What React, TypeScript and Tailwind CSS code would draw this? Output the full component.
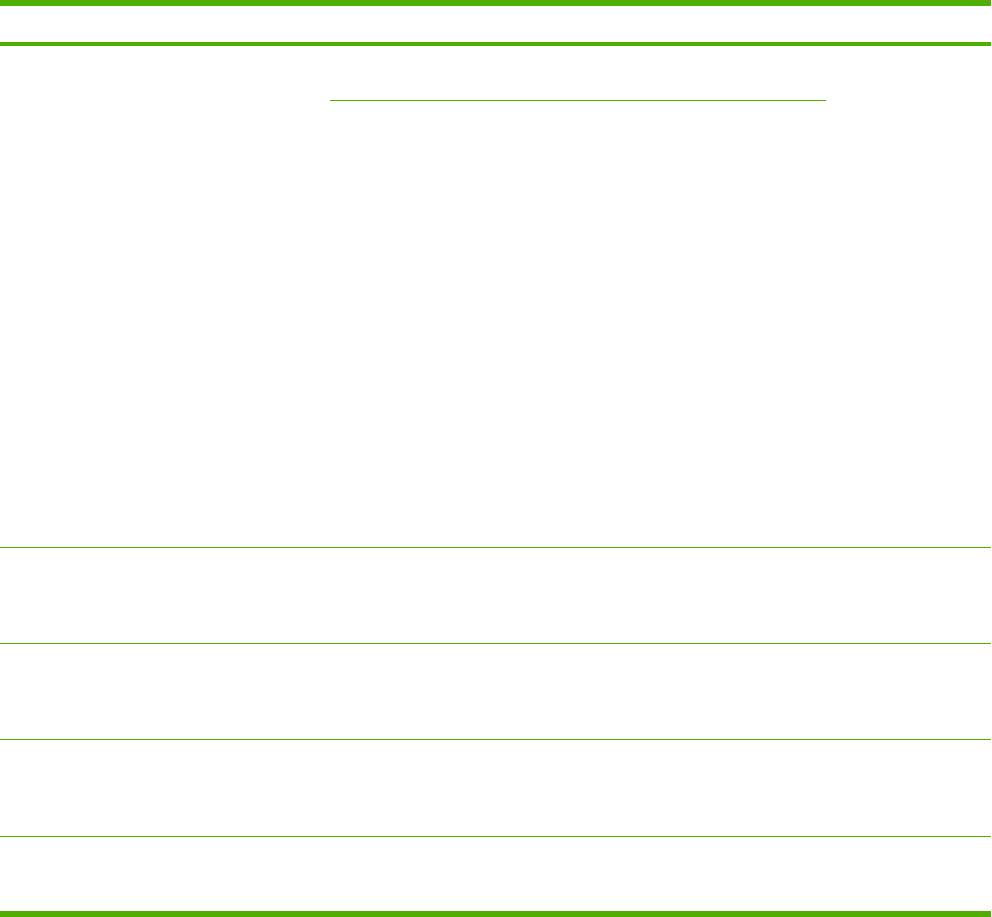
export default function App() {
  const rows = [
    { h: "h-[96px]" },
    { h: "h-[96px]" },
    { h: "h-[97px]" },
  ];

  return (
    <div className="min-h-screen bg-white font-['Liberation_Sans',sans-serif]">
      <div className="w-[991px]">
        {/* heading band */}
        <div className="h-[46px] border-t-[6px] border-b-[4px] border-[#50ae00]" />

        {/* first row with link line */}
        <div className="flex h-[502px] border-b border-[#50ae00]">
          <div className="w-[330px] shrink-0" />
          <div className="pt-[54px]">
            <div className="w-[496px] border-b-[1.5px] border-[#50ae00]" />
          </div>
        </div>

        {rows.map((r, i) => (
          <div key={i} className={`flex ${r.h} border-b border-[#50ae00]`}>
            <div className="w-[330px] shrink-0" />
            <div className="flex-1" />
          </div>
        ))}
        <div className="flex h-[74px]" />

        <div className="h-[6px] bg-[#50ae00]" />
      </div>
    </div>
  );
}
